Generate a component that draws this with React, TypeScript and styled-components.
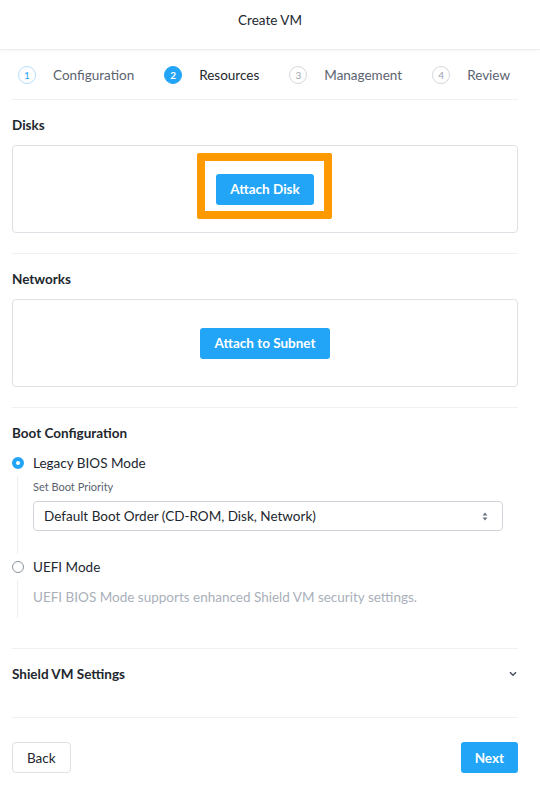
import * as React from "react";
import styled, { createGlobalStyle } from "styled-components";

const GlobalStyle = createGlobalStyle`
    html, body {
        margin: 0;
        padding: 0;
        background: #ffffff;
    }
    body {
        font-family: Lato, "Open Sans", "Liberation Sans", sans-serif;
        color: #22272e;
        -webkit-font-smoothing: antialiased;
    }
`;

const blue = "#22a5f7";
const border = "#dde1e6";

const Page = styled.div`
    width: 540px;
    min-height: 795px;
    display: flex;
    flex-direction: column;
`;

const Header = styled.div`
    height: 50px;
    box-sizing: border-box;
    padding-top: 12px;
    display: flex;
    justify-content: center;
    border-bottom: 1px solid #eceef1;
    box-shadow: 0 1px 2px rgba(0, 0, 0, 0.04);
    font-size: 13.5px;
    line-height: 16px;
    color: #22272e;
`;

const Body = styled.div`
    padding: 0 22px 0 12px;
    display: flex;
    flex-direction: column;
`;

const Steps = styled.div`
    height: 49px;
    display: flex;
    align-items: center;
    padding-left: 6px;
    gap: 30px;
    border-bottom: 1px solid #eef0f2;
`;

const Step = styled.div`
    display: flex;
    align-items: center;
    gap: 17px;
`;

const StepCircle = styled.span<{ $state: "done" | "active" | "todo" }>`
    width: 18px;
    height: 18px;
    box-sizing: border-box;
    border-radius: 50%;
    display: flex;
    align-items: center;
    justify-content: center;
    font-size: 10px;
    font-weight: ${(p) => (p.$state === "active" ? 700 : 400)};
    border: 1px solid ${(p) => (p.$state === "done" ? "#b7e0fb" : p.$state === "active" ? blue : "#d4d8de")};
    background: ${(p) => (p.$state === "active" ? blue : "#fff")};
    color: ${(p) => (p.$state === "done" ? blue : p.$state === "active" ? "#fff" : "#9aa1ab")};
`;

const StepLabel = styled.span<{ $active?: boolean }>`
    font-size: 13.5px;
    color: ${(p) => (p.$active ? "#22272e" : "#5b6370")};
`;

const Section = styled.div<{ $bottom?: number }>`
    padding: 17px 0 ${(p) => p.$bottom ?? 20}px;
    border-bottom: 1px solid #eef0f2;
`;

const SectionTitle = styled.div`
    font-size: 13.5px;
    font-weight: 700;
    line-height: 16px;
    color: #22272e;
`;

const Box = styled.div`
    margin-top: 12px;
    height: 88px;
    box-sizing: border-box;
    border: 1px solid ${border};
    border-radius: 4px;
    display: flex;
    align-items: center;
    justify-content: center;
`;

const PrimaryButton = styled.button`
    height: 31px;
    padding: 0 14px;
    border: none;
    border-radius: 3px;
    background: ${blue};
    color: #fff;
    font-family: inherit;
    font-size: 13.5px;
    font-weight: 700;
    cursor: pointer;
`;

const HighlightWrap = styled.div`
    position: relative;
    display: flex;
`;

const Highlight = styled.div`
    position: absolute;
    left: -19px;
    top: -21px;
    width: 135px;
    height: 66px;
    box-sizing: border-box;
    border: 8px solid #ff9900;
    border-radius: 2px;
    pointer-events: none;
`;

const RadioBlock = styled.div`
    margin-top: 12px;
`;

const RadioRow = styled.div`
    display: flex;
    align-items: center;
    height: 20px;
    gap: 9px;
    font-size: 13.5px;
    color: #22272e;
`;

const Radio = styled.span<{ $checked?: boolean }>`
    width: 12px;
    height: 12px;
    box-sizing: border-box;
    border-radius: 50%;
    background: #fff;
    border: ${(p) => (p.$checked ? `4px solid ${blue}` : "1px solid #8b939e")};
`;

const Nested = styled.div<{ $top: number; $bottom: number }>`
    margin: 3px 0 3px 5px;
    border-left: 1px solid #eceef1;
    padding: ${(p) => p.$top}px 0 ${(p) => p.$bottom}px 15px;
`;

const SmallLabel = styled.div`
    font-size: 11px;
    line-height: 14px;
    color: #5b6370;
`;

const SelectBox = styled.div`
    margin-top: 7px;
    height: 30px;
    width: 470px;
    box-sizing: border-box;
    border: 1px solid #cfd4da;
    border-radius: 4px;
    padding: 0 14px 0 10px;
    display: flex;
    align-items: center;
    justify-content: space-between;
    font-size: 13.5px;
    color: #22272e;
`;

const Hint = styled.div`
    font-size: 13.5px;
    line-height: 16px;
    color: #a9b0ba;
`;

const CollapseRow = styled.div`
    display: flex;
    align-items: center;
    justify-content: space-between;
    padding-right: 1px;
`;

const Footer = styled.div`
    padding: 24px 0 0;
    display: flex;
    justify-content: space-between;
`;

const SecondaryButton = styled.button`
    height: 31px;
    padding: 0 14px;
    border: 1px solid ${border};
    border-radius: 4px;
    background: #fff;
    color: #22272e;
    font-family: inherit;
    font-size: 13.5px;
    cursor: pointer;
`;

const steps: { n: number; label: string; state: "done" | "active" | "todo" }[] = [
    { n: 1, label: "Configuration", state: "done" },
    { n: 2, label: "Resources", state: "active" },
    { n: 3, label: "Management", state: "todo" },
    { n: 4, label: "Review", state: "todo" },
];

const SortIcon = () => (
    <svg width="6" height="9" viewBox="0 0 6 9">
        <path d="M3 0.5 L5.5 3.5 H0.5 Z" fill="#6b7380" />
        <path d="M3 8.5 L5.5 5.5 H0.5 Z" fill="#6b7380" />
    </svg>
);

const Chevron = () => (
    <svg width="8" height="6" viewBox="0 0 8 6">
        <path d="M1 1.2 L4 4.2 L7 1.2" stroke="#4b5360" strokeWidth="1.6" fill="none" />
    </svg>
);

export default function App() {
    return (
        <Page>
            <GlobalStyle />
            <Header>Create VM</Header>
            <Body>
                <Steps>
                    {steps.map((s) => (
                        <Step key={s.n}>
                            <StepCircle $state={s.state}>{s.n}</StepCircle>
                            <StepLabel $active={s.state === "active"}>{s.label}</StepLabel>
                        </Step>
                    ))}
                </Steps>

                <Section>
                    <SectionTitle>Disks</SectionTitle>
                    <Box>
                        <HighlightWrap>
                            <PrimaryButton>Attach Disk</PrimaryButton>
                            <Highlight />
                        </HighlightWrap>
                    </Box>
                </Section>

                <Section>
                    <SectionTitle>Networks</SectionTitle>
                    <Box>
                        <PrimaryButton>Attach to Subnet</PrimaryButton>
                    </Box>
                </Section>

                <Section $bottom={27}>
                    <SectionTitle>Boot Configuration</SectionTitle>
                    <RadioBlock>
                        <RadioRow>
                            <Radio $checked />
                            Legacy BIOS Mode
                        </RadioRow>
                        <Nested $top={4} $bottom={23}>
                            <SmallLabel>Set Boot Priority</SmallLabel>
                            <SelectBox>
                                <span>Default Boot Order (CD-ROM, Disk, Network)</span>
                                <SortIcon />
                            </SelectBox>
                        </Nested>
                        <RadioRow>
                            <Radio />
                            UEFI Mode
                        </RadioRow>
                        <Nested $top={9} $bottom={13}>
                            <Hint>UEFI BIOS Mode supports enhanced Shield VM security settings.</Hint>
                        </Nested>
                    </RadioBlock>
                </Section>

                <Section $bottom={35}>
                    <CollapseRow>
                        <SectionTitle>Shield VM Settings</SectionTitle>
                        <Chevron />
                    </CollapseRow>
                </Section>

                <Footer>
                    <SecondaryButton>Back</SecondaryButton>
                    <PrimaryButton>Next</PrimaryButton>
                </Footer>
            </Body>
        </Page>
    );
}
